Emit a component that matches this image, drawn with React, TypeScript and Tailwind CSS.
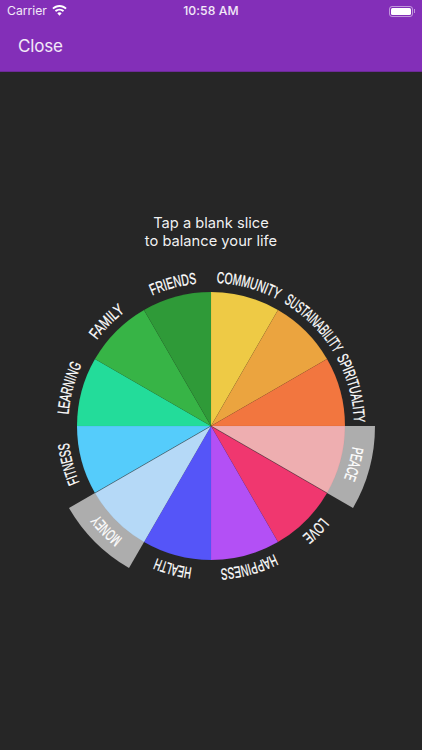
const CX = 170;
const CY = 170;
const R = 134;
const GRAY_R = 164;
const LABEL_R = 143;

const slices = [
  { name: "COMMUNITY", color: "#eeca45", length: 64 },
  { name: "SUSTAINABILITY", color: "#eba43f", length: 72 },
  { name: "SPIRITUALITY", color: "#f2763f", length: 68 },
  { name: "PEACE", color: "#eeaeb0", length: 33, blank: true },
  { name: "LOVE", color: "#f0376f", length: 27 },
  { name: "HAPPINESS", color: "#b350f5", length: 56 },
  { name: "HEALTH", color: "#5555f8", length: 37 },
  { name: "MONEY", color: "#b5d9f7", length: 34, blank: true },
  { name: "FITNESS", color: "#55ccfb", length: 41 },
  { name: "LEARNING", color: "#23dc9a", length: 52 },
  { name: "FAMILY", color: "#37b446", length: 40 },
  { name: "FRIENDS", color: "#2f9a38", length: 46 },
];

const point = (r: number, deg: number) => {
  const a = (deg * Math.PI) / 180;
  return `${(CX + r * Math.sin(a)).toFixed(2)} ${(CY - r * Math.cos(a)).toFixed(2)}`;
};

const wedge = (r: number, start: number, end: number) =>
  `M${CX} ${CY} L${point(r, start)} A${r} ${r} 0 0 1 ${point(r, end)} Z`;

function StatusBar() {
  return (
    <div className="flex h-[22px] items-center justify-between pl-[7px] pr-[7px] text-[12.2px] text-white/90">
      <div className="flex w-[120px] items-center gap-[5px]">
        <span>Carrier</span>
        <svg width="15" height="11" viewBox="0 0 15 11" fill="white">
          <path d="M7.5 0C4.7 0 2.2 1.1.3 2.9l1.3 1.4C3.1 2.8 5.2 1.9 7.5 1.9s4.4.9 5.9 2.4l1.3-1.4C12.8 1.1 10.3 0 7.5 0z" />
          <path d="M7.5 3.7c-1.8 0-3.4.7-4.6 1.9l1.3 1.4c.9-.8 2-1.4 3.3-1.4s2.4.6 3.3 1.4l1.3-1.4C10.9 4.4 9.3 3.7 7.5 3.7z" />
          <path d="M7.5 7.3c-.9 0-1.6.3-2.2.9l2.2 2.5 2.2-2.5c-.6-.6-1.3-.9-2.2-.9z" />
        </svg>
      </div>
      <span className="font-medium tracking-[0.1px]">10:58 AM</span>
      <div className="flex w-[120px] items-center justify-end">
        <div className="flex h-[11px] w-[24px] items-center rounded-[3px] border border-white/50 p-[1px]">
          <div className="h-full w-full rounded-[1.5px] bg-white" />
        </div>
        <div className="ml-[1px] h-[4px] w-[1px] bg-white/50" />
      </div>
    </div>
  );
}

function Wheel() {
  return (
    <svg width="340" height="340" viewBox="0 0 340 340" className="block">
      <defs>
        {slices.map((s, i) => (
          <path
            key={s.name}
            id={`arc-${i}`}
            d={`M${point(LABEL_R, i * 30 - 30)} A${LABEL_R} ${LABEL_R} 0 0 1 ${point(LABEL_R, i * 30 + 60)}`}
          />
        ))}
      </defs>
      {slices.map((s, i) =>
        s.blank ? <path key={s.name} d={wedge(GRAY_R, i * 30, i * 30 + 30)} fill="#adadad" /> : null,
      )}
      {slices.map((s, i) => (
        <path
          key={s.name}
          d={wedge(R, i * 30, i * 30 + 30)}
          fill={s.color}
          stroke="#000000"
          strokeOpacity="0.05"
          strokeWidth="0.6"
        />
      ))}
      {/* darker edge under the two blank slices */}
      <path d={`M${CX} ${CY} L${point(R, 120)} M${CX} ${CY} L${point(R, 240)}`} stroke="#333333" strokeOpacity="0.6" strokeWidth="0.8" />
      {slices.map((s, i) => (
        <text
          key={s.name}
          fill="white"
          stroke="white"
          strokeWidth="0.3"
          fontSize="16"
          fontFamily="'Liberation Sans Narrow', 'Liberation Sans', sans-serif"
          textAnchor="middle"
        >
          <textPath href={`#arc-${i}`} startOffset="50%" textLength={s.length} lengthAdjust="spacingAndGlyphs">
            {s.name}
          </textPath>
        </text>
      ))}
    </svg>
  );
}

export default function App() {
  return (
    <div className="flex h-[750px] w-[422px] flex-col overflow-hidden bg-[#262626] font-['Inter',sans-serif]">
      <div className="h-[72px] border-b border-[#6d2a97] bg-[#832fb8]">
        <StatusBar />
        <div className="pl-[18px] pt-[12px] text-[17px] leading-[24px] tracking-[-0.2px] text-white/90">Close</div>
      </div>
      <div className="flex flex-col items-center">
        <p className="mt-[142px] text-center text-[14.7px] leading-[18px] text-white/95">
          Tap a blank slice
          <br />
          to balance your life
        </p>
        <div className="mt-[6px]">
          <Wheel />
        </div>
      </div>
    </div>
  );
}
